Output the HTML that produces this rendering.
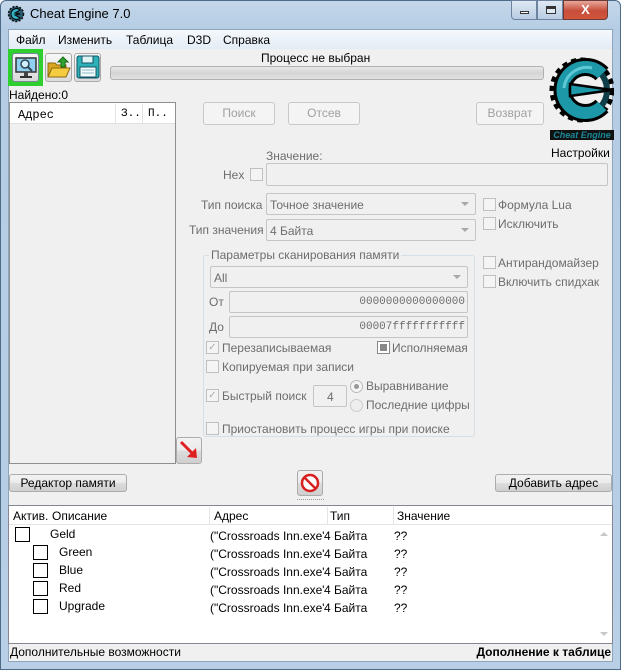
<!DOCTYPE html>
<html><head><meta charset="utf-8"><style>
*{box-sizing:border-box;margin:0;padding:0}
body{width:621px;height:670px;overflow:hidden;font-family:"Liberation Sans",sans-serif;font-size:12px;color:#000;background:#fff}
.a{position:absolute;white-space:nowrap}
.win{position:absolute;left:0;top:0;width:621px;height:670px;background:linear-gradient(#c4d7ea,#b4cce4 30px,#b9cfe6);border:1px solid #4d6a87;border-radius:6px 6px 0 0}
.client{position:absolute;left:8px;top:29px;width:605px;height:633px;background:#f0f0f0;border:1px solid #8da4bd}
.btn{position:absolute;border:1px solid #acacac;border-radius:3px;background:linear-gradient(#f2f2f2,#ebebeb 50%,#dddddd 51%,#cfcfcf);text-align:center;line-height:16px}
.dis{border-color:#c8c8c8;background:#f4f4f4;color:#a0a0a0}
.inp{position:absolute;border:1px solid #c5c5c5;background:#f0f0f0;border-radius:2px}
.cb{position:absolute;width:13px;height:13px;border:1px solid #c0c0c0;background:#f4f4f4}
.gt{color:#6d6d6d}
.arr{position:absolute;right:6px;top:8px;width:0;height:0;border-left:4px solid transparent;border-right:4px solid transparent;border-top:4px solid #a8a8a8}
.bk{position:absolute;width:15px;height:15px;border:1px solid #000;background:#fff}
</style></head><body>
<div class="win"></div>
<svg class="a" style="left:7px;top:5px" width="18" height="18" viewBox="0 0 18 18"><circle cx="9" cy="9" r="7.5" fill="#2a5a70" stroke="#111" stroke-width="1.5" stroke-dasharray="2 1.5"/><path d="M13 5 C10 2 4 4 4 9 C4 14 10 16 13 13 L8 10 L13 9 L8 8 Z" fill="#2fb0c4" stroke="#000" stroke-width="1"/></svg>
<div class="a" style="left:30px;top:6px;font-size:13px;color:#000">Cheat Engine 7.0</div>
<div class="a" style="left:511px;top:0;width:26px;height:20px;border:1px solid #6d84a0;border-radius:0 0 0 4px;background:linear-gradient(#dfe9f4,#b8cce2)"><div class="a" style="left:8px;top:10px;width:9px;height:3px;background:#fff;border:1px solid #333"></div></div>
<div class="a" style="left:537px;top:0;width:26px;height:20px;border:1px solid #6d84a0;background:linear-gradient(#dfe9f4,#b8cce2)"><div class="a" style="left:8px;top:5px;width:10px;height:8px;border:1px solid #333;border-top-width:3px;background:#dfe9f4"></div></div>
<div class="a" style="left:563px;top:0;width:45px;height:20px;border:1px solid #6d3a3a;border-radius:0 0 4px 0;background:linear-gradient(#e8a89a,#c74d3a 55%,#d0553c);color:#fff;font-weight:bold;font-size:13px;text-align:center;line-height:18px">X</div>
<div class="client"></div>
<div class="a" style="left:9px;top:30px;width:603px;height:19px;background:linear-gradient(#f6f9fd,#e3ebf5)"></div>
<div class="a" style="left:16px;top:33px">Файл</div>
<div class="a" style="left:58px;top:33px">Изменить</div>
<div class="a" style="left:126px;top:33px">Таблица</div>
<div class="a" style="left:187px;top:33px">D3D</div>
<div class="a" style="left:223px;top:33px">Справка</div>
<div class="a" style="left:8px;top:49px;width:35px;height:37px;background:#2fcf2f"></div>
<div class="a" style="left:12px;top:53px;width:27px;height:29px;border:1px solid #7a8a9a;border-radius:3px;background:linear-gradient(#f8f8f8,#d8d8d8)"></div>
<svg class="a" style="left:13px;top:55px" width="26" height="26" viewBox="0 0 26 26"><rect x="3" y="3" width="20" height="14" fill="#8fd0f0" stroke="#333" stroke-width="1.5"/><rect x="11" y="17" width="4" height="4" fill="#444"/><rect x="7" y="21" width="12" height="2" fill="#333"/><circle cx="12" cy="9" r="4" fill="#cdefff" stroke="#345" stroke-width="1.5"/><path d="M15 12 L19 16" stroke="#345" stroke-width="2"/></svg>
<div class="a" style="left:45px;top:53px;width:27px;height:29px;border:1px solid #aaa;border-radius:3px;background:linear-gradient(#f8f8f8,#dcdcdc)"></div>
<svg class="a" style="left:46px;top:54px" width="26" height="26" viewBox="0 0 26 26"><path d="M2 9 H9 L11 11 H20 V23 H2 Z" fill="#d9a520" stroke="#8a6a10"/><path d="M2 23 L6 14 H24 L20 23 Z" fill="#f5cc40" stroke="#8a6a10"/><path d="M17 3 L22 8 H19 V13 H15 V8 H12 Z" fill="#2fa52f" stroke="#1a6a1a"/></svg>
<div class="a" style="left:74px;top:53px;width:27px;height:29px;border:1px solid #aaa;border-radius:3px;background:linear-gradient(#f8f8f8,#dcdcdc)"></div>
<svg class="a" style="left:75px;top:54px" width="26" height="26" viewBox="0 0 26 26"><rect x="2" y="2" width="22" height="22" rx="2" fill="#2eb0b8" stroke="#156" /><rect x="7" y="2" width="11" height="7" fill="#e0f4f6" stroke="#156"/><rect x="5" y="13" width="16" height="10" fill="#f4fbfc" stroke="#156"/><path d="M7 16 H19 M7 19 H19" stroke="#8bc"/></svg>
<div class="a" style="left:261px;top:51px">Процесс не выбран</div>
<div class="a" style="left:110px;top:66px;width:434px;height:14px;border:1px solid #b0b0b0;border-radius:3px;background:linear-gradient(#e8e8e8,#d4d4d4 50%,#e2e2e2)"></div>
<!-- logo -->
<svg class="a" style="left:548px;top:48px" width="66" height="94" viewBox="0 0 66 94">
<circle cx="34" cy="42" r="29" fill="none" stroke="#000" stroke-width="7" stroke-dasharray="5 4"/>
<circle cx="34" cy="42" r="25" fill="none" stroke="#0f3f48" stroke-width="6"/>
<path d="M54 26 A23 23 0 1 0 54 58" fill="none" stroke="#000" stroke-width="18"/>
<path d="M54 26 A23 23 0 1 0 54 58" fill="none" stroke="#1c98a8" stroke-width="12"/>
<path d="M22 36 L64 42 L22 48 Z" fill="#1c98a8" stroke="#000" stroke-width="2.5"/>
<path d="M44 20 A23 23 0 0 0 16 40" fill="none" stroke="#5fc8d6" stroke-width="3"/>
<rect x="2" y="82" width="64" height="10" fill="#111"/><text x="34" y="90" font-size="9" font-style="italic" font-weight="bold" fill="#1a8a9a" text-anchor="middle" font-family="Liberation Sans">Cheat Engine</text></svg>
<div class="a" style="left:551px;top:146px">Настройки</div>
<div class="a" style="left:9px;top:88px">Найдено:0</div>
<div class="a" style="left:9px;top:102px;width:167px;height:362px;background:#f0f0f0;border:1px solid #8e8f8f"></div>
<div class="a" style="left:10px;top:103px;width:165px;height:21px;background:#fff;border-bottom:1px solid #e0e0e0"></div>
<div class="a" style="left:115px;top:104px;width:1px;height:20px;background:#e3e3e3"></div>
<div class="a" style="left:142px;top:104px;width:1px;height:20px;background:#e3e3e3"></div>
<div class="a" style="left:18px;top:108px;font-family:'Liberation Mono',monospace;font-size:12px">Адрес</div>
<div class="a" style="left:121px;top:108px;font-family:'Liberation Mono',monospace;font-size:11px">З..</div>
<div class="a" style="left:148px;top:108px;font-family:'Liberation Mono',monospace;font-size:11px">П..</div>
<div class="btn dis" style="left:203px;top:102px;width:72px;height:23px;line-height:21px">Поиск</div>
<div class="btn dis" style="left:288px;top:102px;width:72px;height:23px;line-height:21px">Отсев</div>
<div class="btn dis" style="left:476px;top:102px;width:68px;height:23px;line-height:21px">Возврат</div>
<div class="a gt" style="left:266px;top:149px">Значение:</div>
<div class="a gt" style="left:223px;top:168px">Hex</div>
<div class="cb" style="left:250px;top:168px"></div>
<div class="inp" style="left:266px;top:163px;width:342px;height:23px"></div>
<div class="a gt" style="left:201px;top:198px">Тип поиска</div>
<div class="inp" style="left:266px;top:193px;width:210px;height:22px"><div class="a gt" style="left:3px;top:4px">Точное значение</div><div class="arr"></div></div>
<div class="a gt" style="left:189px;top:223px">Тип значения</div>
<div class="inp" style="left:266px;top:219px;width:210px;height:22px"><div class="a gt" style="left:3px;top:4px">4 Байта</div><div class="arr"></div></div>
<div class="cb" style="left:483px;top:198px"></div><div class="a gt" style="left:498px;top:198px">Формула Lua</div>
<div class="cb" style="left:483px;top:217px"></div><div class="a gt" style="left:498px;top:217px">Исключить</div>
<div class="cb" style="left:483px;top:256px"></div><div class="a gt" style="left:498px;top:256px">Антирандомайзер</div>
<div class="cb" style="left:483px;top:275px"></div><div class="a gt" style="left:498px;top:275px">Включить спидхак</div>
<div class="a" style="left:203px;top:255px;width:272px;height:182px;border:1px solid #d5dfe5;border-radius:3px"></div>
<div class="a gt" style="left:209px;top:248px;background:#f0f0f0;padding:0 2px">Параметры сканирования памяти</div>
<div class="inp" style="left:210px;top:266px;width:258px;height:22px"><div class="a gt" style="left:3px;top:4px">All</div><div class="arr"></div></div>
<div class="a gt" style="left:209px;top:295px">От</div>
<div class="inp" style="left:229px;top:291px;width:239px;height:22px"><div class="a gt" style="right:2px;top:4px;font-family:'Liberation Mono',monospace;font-size:11px">0000000000000000</div></div>
<div class="a gt" style="left:209px;top:320px">До</div>
<div class="inp" style="left:229px;top:316px;width:239px;height:22px"><div class="a gt" style="right:2px;top:4px;font-family:'Liberation Mono',monospace;font-size:11px">00007fffffffffff</div></div>
<div class="cb" style="left:206px;top:341px;color:#aaa;font-size:10px;line-height:11px;text-align:center">✓</div><div class="a gt" style="left:222px;top:341px">Перезаписываемая</div>
<div class="cb" style="left:377px;top:341px;background:#fff;border-color:#888"><div class="a" style="left:2px;top:2px;width:7px;height:7px;background:#888"></div></div><div class="a gt" style="left:392px;top:341px">Исполняемая</div>
<div class="cb" style="left:206px;top:360px"></div><div class="a gt" style="left:222px;top:360px">Копируемая при записи</div>
<div class="cb" style="left:206px;top:389px;color:#aaa;font-size:10px;line-height:11px;text-align:center">✓</div><div class="a gt" style="left:222px;top:389px">Быстрый поиск</div>
<div class="inp" style="left:313px;top:385px;width:34px;height:22px"><div class="a gt" style="left:13px;top:4px">4</div></div>
<div class="a" style="left:350px;top:380px;width:13px;height:13px;border-radius:50%;border:1px solid #bbb;background:#f4f4f4"><div class="a" style="left:3px;top:3px;width:5px;height:5px;border-radius:50%;background:#999"></div></div><div class="a gt" style="left:366px;top:379px">Выравнивание</div>
<div class="a" style="left:350px;top:399px;width:13px;height:13px;border-radius:50%;border:1px solid #ccc;background:#eee"></div><div class="a gt" style="left:366px;top:398px">Последние цифры</div>
<div class="cb" style="left:206px;top:422px"></div><div class="a gt" style="left:222px;top:422px">Приостановить процесс игры при поиске</div>
<div class="btn" style="left:176px;top:437px;width:26px;height:27px"></div>
<svg class="a" style="left:178px;top:439px" width="22" height="22" viewBox="0 0 22 22"><path d="M3 3 L15 15" stroke="#e02020" stroke-width="3"/><path d="M19 19 L9 18 L18 9 Z" fill="#e02020"/></svg>
<div class="btn" style="left:9px;top:474px;width:118px;height:18px">Редактор памяти</div>
<div class="btn" style="left:297px;top:470px;width:26px;height:26px"></div>
<svg class="a" style="left:299px;top:472px" width="22" height="22" viewBox="0 0 22 22"><circle cx="11" cy="11" r="8" fill="#fff" stroke="#d82020" stroke-width="2.5"/><path d="M5.5 5.5 L16.5 16.5" stroke="#d82020" stroke-width="2.5"/></svg>
<div class="btn" style="left:495px;top:474px;width:117px;height:18px">Добавить адрес</div>
<div class="a" style="left:297px;top:499px;width:27px;border-top:1px dotted #999"></div>
<div class="a" style="left:8px;top:505px;width:605px;height:139px;background:#fff;border:1px solid #828790"></div>
<div class="a" style="left:9px;top:506px;width:603px;height:19px;background:#fff;border-bottom:1px solid #e5e5e5"></div>
<div class="a" style="left:13px;top:509px">Актив.</div>
<div class="a" style="left:52px;top:509px">Описание</div>
<div class="a" style="left:214px;top:509px">Адрес</div>
<div class="a" style="left:330px;top:509px">Тип</div>
<div class="a" style="left:397px;top:509px">Значение</div>
<div class="a" style="left:209px;top:507px;width:1px;height:18px;background:#e5e5e5"></div>
<div class="a" style="left:327px;top:507px;width:1px;height:18px;background:#e5e5e5"></div>
<div class="a" style="left:393px;top:507px;width:1px;height:18px;background:#e5e5e5"></div>
<div class="a" style="left:596px;top:525px;width:16px;height:118px;background:#fff"></div>
<div class="a" style="left:600px;top:532px;border-left:4px solid transparent;border-right:4px solid transparent;border-bottom:4px solid #c8c8c8"></div>
<div class="a" style="left:600px;top:632px;border-left:4px solid transparent;border-right:4px solid transparent;border-top:4px solid #c8c8c8"></div>
<div class="bk" style="left:15px;top:527px"></div><div class="a" style="left:50px;top:527px">Geld</div>
<div class="bk" style="left:33px;top:545px"></div><div class="a" style="left:59px;top:545px">Green</div>
<div class="bk" style="left:33px;top:563px"></div><div class="a" style="left:59px;top:563px">Blue</div>
<div class="bk" style="left:33px;top:581px"></div><div class="a" style="left:59px;top:581px">Red</div>
<div class="bk" style="left:33px;top:599px"></div><div class="a" style="left:59px;top:599px">Upgrade</div>
<div class="a" style="left:210px;top:527px;line-height:18px">("Crossroads Inn.exe"+<br>("Crossroads Inn.exe"+<br>("Crossroads Inn.exe"+<br>("Crossroads Inn.exe"+<br>("Crossroads Inn.exe"+</div>
<div class="a" style="left:324px;top:527px;line-height:18px;background:#fff">4 Байта<br>4 Байта<br>4 Байта<br>4 Байта<br>4 Байта</div>
<div class="a" style="left:394px;top:527px;line-height:18px">??<br>??<br>??<br>??<br>??</div>
<div class="a" style="left:10px;top:645px">Дополнительные возможности</div>
<div class="a" style="right:10px;top:645px;font-weight:bold">Дополнение к таблице</div>
</body></html>
